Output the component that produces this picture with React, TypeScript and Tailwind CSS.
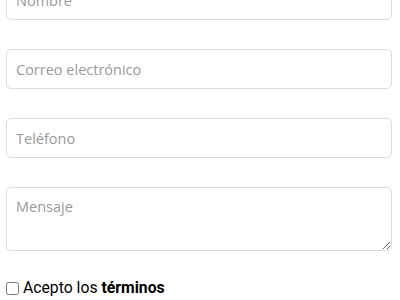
import React from "react";

export default function App() {
  const inputCls =
    "block w-full h-[40px] rounded-[5px] border border-[#dcdcdc] bg-white px-[9px] text-[14.5px] text-[#333] placeholder:text-[#9a9a9a] outline-none";
  return (
    <div className="w-[400px] h-[300px] overflow-hidden bg-white">
      <div
        className="flex flex-col gap-[29px] pl-[6px] pr-[8px] mt-[-20px] w-full"
        style={{ fontFamily: '"Open Sans", sans-serif' }}
      >
        <input className={inputCls} placeholder="Nombre" />
        <input className={inputCls} placeholder="Correo electrónico" />
        <input className={inputCls} placeholder="Teléfono" />
        <textarea
          className="block w-full h-[64px] rounded-[5px] border border-[#dcdcdc] bg-white px-[9px] py-[8px] text-[14.5px] text-[#333] placeholder:text-[#9a9a9a] outline-none"
          placeholder="Mensaje"
        />
      </div>
      <label
        className="mt-[26px] flex items-center gap-[4px] px-[6px] text-[15.75px] leading-[22px] text-black"
        style={{ fontFamily: "Roboto, sans-serif" }}
      >
        <input type="checkbox" className="m-0 h-[13px] w-[13px]" />
        <span>
          Acepto los <b className="font-bold">términos</b>
        </span>
      </label>
    </div>
  );
}
